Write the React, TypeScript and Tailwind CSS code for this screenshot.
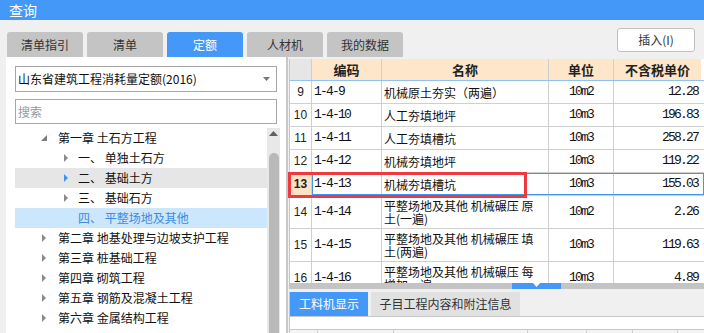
import React from 'react';

const cjk = "font-['Noto_Sans_CJK_SC','Noto_Sans',sans-serif]";
const mono = "font-['Liberation_Mono',monospace] text-[13px] tracking-[-1.8px]";

interface TreeNode {
    label: string;
    level: 0 | 1;
    arrow: 'open' | 'closed' | 'none';
    state?: 'hover' | 'selected';
}

const tree: TreeNode[] = [
    { label: '第一章 土石方工程', level: 0, arrow: 'open' },
    { label: '一、 单独土石方', level: 1, arrow: 'closed' },
    { label: '二、 基础土方', level: 1, arrow: 'closed', state: 'hover' },
    { label: '三、 基础石方', level: 1, arrow: 'closed' },
    { label: '四、 平整场地及其他', level: 1, arrow: 'none', state: 'selected' },
    { label: '第二章 地基处理与边坡支护工程', level: 0, arrow: 'closed' },
    { label: '第三章 桩基础工程', level: 0, arrow: 'closed' },
    { label: '第四章 砌筑工程', level: 0, arrow: 'closed' },
    { label: '第五章 钢筋及混凝土工程', level: 0, arrow: 'closed' },
    { label: '第六章 金属结构工程', level: 0, arrow: 'closed' },
];

interface Row {
    no: number;
    code: string;
    name: string[];
    unit: string;
    price: string;
}

const rows: Row[] = [
    { no: 9, code: '1-4-9', name: ['机械原土夯实（两遍）'], unit: '10m2', price: '12.28' },
    { no: 10, code: '1-4-10', name: ['人工夯填地坪'], unit: '10m3', price: '196.83' },
    { no: 11, code: '1-4-11', name: ['人工夯填槽坑'], unit: '10m3', price: '258.27' },
    { no: 12, code: '1-4-12', name: ['机械夯填地坪'], unit: '10m3', price: '119.22' },
    { no: 13, code: '1-4-13', name: ['机械夯填槽坑'], unit: '10m3', price: '155.03' },
    { no: 14, code: '1-4-14', name: ['平整场地及其他 机械碾压 原', '土(一遍)'], unit: '10m2', price: '2.26' },
    { no: 15, code: '1-4-15', name: ['平整场地及其他 机械碾压 填', '土(两遍)'], unit: '10m3', price: '119.63' },
    { no: 16, code: '1-4-16', name: ['平整场地及其他 机械碾压 每', '增加一遍'], unit: '10m3', price: '4.89' },
];

const tabs = ['清单指引', '清单', '定额', '人材机', '我的数据'];

function Arrow({ kind, blue }: { kind: TreeNode['arrow']; blue?: boolean }) {
    if (kind === 'none') return <span className="w-[6px]" />;
    if (kind === 'open') {
        return (
            <svg width="6" height="6" viewBox="0 0 6 6">
                <polygon points="6,0 6,6 0,6" fill="#7a7a7a" />
            </svg>
        );
    }
    return (
        <svg width="6" height="8" viewBox="0 0 6 8">
            <polygon points="1,0 5,4 1,8" fill={blue ? '#3f95f5' : '#8a8a8a'} />
        </svg>
    );
}

function TreeRow({ node }: { node: TreeNode }) {
    const bg = node.state === 'selected' ? 'bg-[#cce6fc]' : node.state === 'hover' ? 'bg-[#e6e6e6]' : '';
    const color = node.state === 'selected' ? 'text-[#3d8be0]' : 'text-[#111]';
    return (
        <div className={`flex h-[20px] shrink-0 items-center ${bg}`}>
            <div className={`flex items-center ${node.level === 0 ? 'w-[43px] pl-[26px]' : 'w-[63px] pl-[48px]'}`}>
                <Arrow kind={node.arrow} blue={node.state === 'hover'} />
            </div>
            <span className={`whitespace-pre text-[12px] ${color}`}>{node.label}</span>
        </div>
    );
}

function DataRow({ row }: { row: Row }) {
    const active = row.no === 13;
    const tall = row.name.length > 1;
    return (
        <div className={`flex shrink-0 border-b border-[#cfcfcf] ${tall ? 'h-[33px]' : 'h-[23px]'}`}>
            <div
                className={`flex w-[22px] shrink-0 items-center justify-center border-r border-[#cfcfcf] font-['Liberation_Sans',sans-serif] text-[12px] ${active ? 'bg-[#fde3c3] font-bold text-[#222]' : 'text-[#222]'}`}
            >
                {row.no}
            </div>
            <div className={`flex flex-1 ${active ? 'outline outline-1 -outline-offset-1 outline-[#3f95f5]' : ''}`}>
                <div className={`w-[70px] shrink-0 border-r border-[#cfcfcf] pl-[2px] ${mono} flex items-center text-[#111]`}>
                    {row.code}
                </div>
                <div className="flex w-[167px] shrink-0 flex-col justify-center border-r border-[#cfcfcf] pl-[2px] text-[12px] leading-[13px] text-[#111]">
                    {row.name.map((n, i) => (
                        <span key={i} className="whitespace-pre">{n}</span>
                    ))}
                </div>
                <div className={`flex w-[65px] shrink-0 items-center justify-center border-r border-[#cfcfcf] ${mono} text-[#111]`}>
                    {row.unit}
                </div>
                <div className={`flex w-[87px] shrink-0 items-center justify-end pr-[3px] ${mono} text-[#111]`}>
                    {row.price}
                </div>
            </div>
        </div>
    );
}

export default function App() {
    return (
        <div className={`flex h-[333px] w-[704px] flex-col overflow-hidden bg-[#f0f0f0] ${cjk}`}>
            {/* Title bar */}
            <div className="flex h-[20px] shrink-0 items-center bg-[#4499f8] pl-[9px] text-[14px] text-white">
                查询
            </div>

            {/* Tabs + insert button */}
            <div className="mt-[8px] flex h-[29px] shrink-0 pl-[7px] pr-[9px]">
                <div className="flex gap-[4px] self-end">
                    {tabs.map((t) => (
                        <div
                            key={t}
                            className={`flex h-[25px] w-[76px] items-center justify-center rounded-t-[3px] text-[12px] ${t === '定额' ? 'bg-[#4499f8] text-white' : 'bg-[#c4c4c4] text-[#333]'}`}
                        >
                            {t}
                        </div>
                    ))}
                </div>
                <button className="ml-auto flex h-[24px] w-[78px] items-center justify-center self-start rounded-[3px] border border-[#c2c2c2] bg-white text-[12px] text-[#333]">
                    插入(I)
                </button>
            </div>

            {/* Body */}
            <div className="flex min-h-0 flex-1">
                {/* Left panel */}
                <div className="ml-[6px] flex w-[282px] shrink-0 flex-col border-r-2 border-[#c8c8c8] bg-white">
                    <div className="mx-[9px] mt-[9px] flex h-[26px] shrink-0 items-center justify-between border border-[#a6a6a6] pl-[2px] pr-[6px] text-[12px] text-[#111]">
                        <span>山东省建筑工程消耗量定额(2016)</span>
                        <svg width="7" height="4" viewBox="0 0 7 4">
                            <polygon points="0,0 7,0 3.5,4" fill="#777" />
                        </svg>
                    </div>
                    <div className="mx-[9px] mt-[7px] flex h-[25px] shrink-0 items-center border border-[#a6a6a6] pl-[2px] text-[12px] text-[#999]">
                        搜索
                    </div>
                    <div className="mt-[4px] flex min-h-0 flex-1 pl-[9px] pr-[6px]">
                        <div className="flex min-w-0 flex-1 flex-col overflow-hidden">
                            {tree.map((n) => (
                                <TreeRow key={n.label} node={n} />
                            ))}
                        </div>
                        {/* Scrollbar */}
                        <div className="flex w-[13px] shrink-0 flex-col items-center bg-[#e8e8e8]">
                            <svg className="mt-[3px]" width="9" height="5" viewBox="0 0 9 5">
                                <polygon points="0,5 9,5 4.5,0" fill="#606060" />
                            </svg>
                            <div className="mt-[17px] w-[10px] flex-1 rounded-t-[5px] bg-[#b9b9b9]" />
                        </div>
                    </div>
                </div>

                {/* Right panel */}
                <div className="relative flex min-w-0 flex-1 flex-col">
                    <div className="ml-[1px] mt-[2px] flex h-[224px] shrink-0 flex-col overflow-hidden border-l border-[#c8c8c8] bg-white">
                        {/* Header */}
                        <div className="flex h-[22px] shrink-0 border-b border-[#8ec1f5] text-[13px] font-bold text-[#222]">
                            <div className="w-[22px] shrink-0 border-r border-[#cfcfcf] bg-[#e6e6e6]" />
                            <div className="flex w-[70px] shrink-0 items-center justify-center border-r border-[#cfcfcf] bg-[#fde6c9]">编码</div>
                            <div className="flex w-[167px] shrink-0 items-center justify-center border-r border-[#cfcfcf] bg-[#fde6c9]">名称</div>
                            <div className="flex w-[65px] shrink-0 items-center justify-center border-r border-[#cfcfcf] bg-[#fde6c9]">单位</div>
                            <div className="flex w-[87px] shrink-0 items-center justify-center bg-[#fde6c9]">不含税单价</div>
                        </div>
                        {rows.map((r) => (
                            <DataRow key={r.no} row={r} />
                        ))}
                    </div>

                    {/* Splitter */}
                    <div className="relative ml-[1px] h-[6px] shrink-0 bg-[#c4c4c4]">
                        <div className="absolute left-[223px] top-0 flex h-[6px] w-[49px] items-start justify-center bg-[#4499f8]">
                            <svg width="7" height="4" viewBox="0 0 7 4">
                                <polygon points="0,0 7,0 3.5,4" fill="#fff" />
                            </svg>
                        </div>
                    </div>

                    {/* Bottom tabs */}
                    <div className="ml-[1px] mt-[3px] flex h-[24px] shrink-0 gap-[3px] border-l border-[#c8c8c8]">
                        <div className="flex w-[78px] items-center justify-center bg-[#4499f8] text-[12px] text-white">工料机显示</div>
                        <div className="flex w-[149px] items-center justify-center bg-[#e1e1e1] text-[12px] text-[#333]">子目工程内容和附注信息</div>
                    </div>
                    <div className="ml-[1px] flex flex-1 flex-col border-l border-t border-[#c8c8c8] bg-white">
                        <div className="mt-[12px] flex h-[10px] border-t border-[#c8c8c8] bg-[#f4f4f4]">
                            <div className="w-[28px] border-r border-[#d0d0d0]" />
                            <div className="w-[76px] border-r border-[#d0d0d0]" />
                            <div className="w-[134px] border-r border-[#d0d0d0]" />
                            <div className="w-[59px] border-r border-[#d0d0d0]" />
                            <div className="w-[46px] border-r border-[#d0d0d0]" />
                            <div className="w-[45px] border-r border-[#d0d0d0]" />
                        </div>
                    </div>

                    {/* Red annotation box */}
                    <div className="pointer-events-none absolute left-0 top-[115px] h-[26px] w-[239px] border-[3px] border-[#ee3a3f]" />
                </div>
            </div>
        </div>
    );
}
